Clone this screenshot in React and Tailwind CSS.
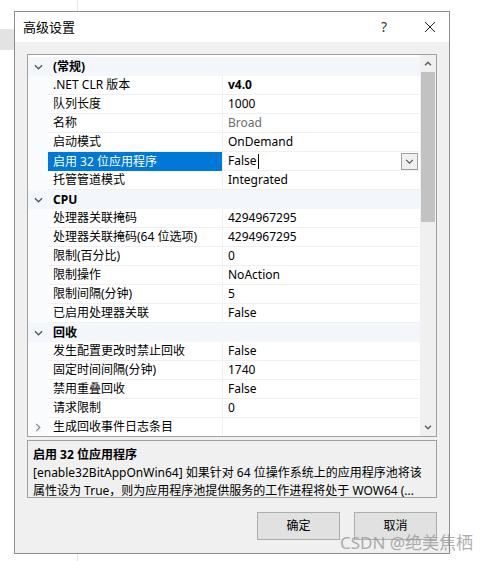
import React from "react";

const rows = [
  { cat: "(常规)" },
  { name: ".NET CLR 版本", value: "v4.0", bold: true },
  { name: "队列长度", value: "1000" },
  { name: "名称", value: "Broad", gray: true },
  { name: "启动模式", value: "OnDemand" },
  { name: "启用 32 位应用程序", value: "False", selected: true },
  { name: "托管管道模式", value: "Integrated" },
  { cat: "CPU" },
  { name: "处理器关联掩码", value: "4294967295" },
  { name: "处理器关联掩码(64 位选项)", value: "4294967295" },
  { name: "限制(百分比)", value: "0" },
  { name: "限制操作", value: "NoAction" },
  { name: "限制间隔(分钟)", value: "5" },
  { name: "已启用处理器关联", value: "False" },
  { cat: "回收" },
  { name: "发生配置更改时禁止回收", value: "False" },
  { name: "固定时间间隔(分钟)", value: "1740" },
  { name: "禁用重叠回收", value: "False" },
  { name: "请求限制", value: "0" },
  { name: "生成回收事件日志条目", value: "", collapsed: true },
];

const ChevronDown = ({ className }) => (
  <svg viewBox="0 0 10 6" className={className} fill="none" stroke="currentColor" strokeWidth="1.4">
    <polyline points="1,1 5,5 9,1" />
  </svg>
);

const ChevronRight = ({ className }) => (
  <svg viewBox="0 0 6 10" className={className} fill="none" stroke="currentColor" strokeWidth="1.4">
    <polyline points="1,1 5,5 1,9" />
  </svg>
);

const Row = ({ row }) => {
  if (row.cat) {
    return (
      <div className="flex h-[19px] items-center bg-[#f3f6fb]">
        <div className="flex w-[20px] justify-center">
          <ChevronDown className="h-[6px] w-[9px] text-[#555]" />
        </div>
        <div className="pl-[5px] font-bold">{row.cat}</div>
      </div>
    );
  }
  return (
    <div className="flex h-[19px]">
      <div className="flex w-[20px] items-center justify-center bg-[#fafbfd]">
        {row.collapsed && <ChevronRight className="h-[9px] w-[6px] text-[#888]" />}
      </div>
      <div
        className={
          row.selected
            ? "flex w-[174px] items-center bg-[#0078d7] pl-[5px] text-white"
            : "flex w-[174px] items-center border-b border-[#f0f0f0] pl-[5px]"
        }
      >
        <span className="whitespace-nowrap">{row.name}</span>
      </div>
      <div className="w-px bg-[#f0f0f0]" />
      <div className="flex flex-1 items-center border-b border-[#f0f0f0] pl-[5px] pr-[2px]">
        <span
          className={
            (row.bold ? "font-bold " : "") + (row.gray ? "text-[#6d6d6d]" : "text-black")
          }
        >
          {row.value}
        </span>
        {row.selected && (
          <>
            <span className="ml-px h-[15px] w-px bg-black" />
            <div className="ml-auto flex h-[17px] w-[17px] items-center justify-center border border-[#a0a0a0] bg-[#f0f0f0]">
              <ChevronDown className="h-[5px] w-[9px] text-[#555]" />
            </div>
          </>
        )}
      </div>
    </div>
  );
};

export default function App() {
  return (
    <div
      className="relative h-[561px] w-[492px] overflow-hidden bg-white text-[12px] leading-[16px] text-black"
      style={{ fontFamily: '"Noto Sans", "Noto Sans CJK SC", sans-serif' }}
    >
      {/* background window bits */}
      <div className="absolute left-[77px] top-0 h-full w-px bg-[#e6e6e6]" />
      <div className="absolute left-0 top-[29px] h-[21px] w-[14px] bg-[#e3e3e3]" />

      {/* dialog */}
      <div className="relative ml-[14px] mt-[11px] flex h-[543px] w-[436px] flex-col border border-[#8c8c8c] bg-[#f0f0f0]">
        {/* title bar */}
        <div className="flex h-[30px] items-center bg-white pl-[8px]">
          <span className="text-[13px]">高级设置</span>
          <span className="ml-auto mr-[38px] text-[14px] text-[#333]">?</span>
          <svg viewBox="0 0 10 10" className="mr-[14px] h-[10px] w-[10px] text-[#222]" stroke="currentColor" strokeWidth="1">
            <line x1="0" y1="0" x2="10" y2="10" />
            <line x1="10" y1="0" x2="0" y2="10" />
          </svg>
        </div>

        <div className="flex flex-1 flex-col px-[12px] pt-[12px]">
          {/* property grid */}
          <div className="flex h-[383px] w-[410px] border border-[#a0a0a0] bg-white">
            <div className="flex-1 overflow-hidden pt-[2px]">
              {rows.map((row, i) => (
                <Row key={i} row={row} />
              ))}
            </div>
            <div className="flex w-[16px] flex-col bg-[#f0f0f0]">
              <div className="flex h-[17px] items-center justify-center">
                <svg viewBox="0 0 9 6" className="h-[5px] w-[8px] text-[#606060]" fill="none" stroke="currentColor" strokeWidth="1.8">
                  <polyline points="1,5 4.5,1.5 8,5" />
                </svg>
              </div>
              <div className="mx-px h-[150px] bg-[#c2c2c2]" />
              <div className="flex-1" />
              <div className="flex h-[17px] items-center justify-center">
                <svg viewBox="0 0 9 6" className="h-[5px] w-[8px] text-[#606060]" fill="none" stroke="currentColor" strokeWidth="1.8">
                  <polyline points="1,1 4.5,4.5 8,1" />
                </svg>
              </div>
            </div>
          </div>

          {/* description */}
          <div className="mt-[3px] h-[58px] w-[410px] border border-[#a0a0a0] px-[5px] pt-[5px] leading-[18px]">
            <div className="font-bold">启用 32 位应用程序</div>
            <div className="whitespace-nowrap">
              [enable32BitAppOnWin64] 如果针对 64 位操作系统上的应用程序池将该
            </div>
            <div className="whitespace-nowrap">
              属性设为 True，则为应用程序池提供服务的工作进程将处于 WOW64 (...
            </div>
          </div>

          {/* buttons */}
          <div className="mt-[14px] flex w-[410px] justify-end gap-[14px]">
            <button className="h-[28px] w-[83px] border border-[#adadad] bg-[#e1e1e1]">确定</button>
            <button className="h-[28px] w-[83px] border border-[#adadad] bg-[#e1e1e1]">取消</button>
          </div>
        </div>
      </div>

      {/* watermark */}
      <div className="absolute left-[340px] top-[533px] whitespace-nowrap text-[17px] leading-[20px] text-[#9a9a9a] opacity-80">
        CSDN @绝美焦栖
      </div>
    </div>
  );
}
